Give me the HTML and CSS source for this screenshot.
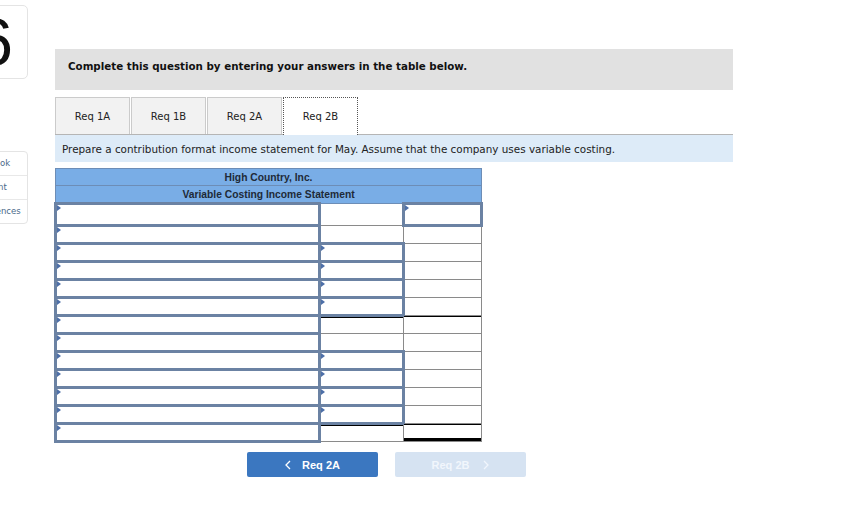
FILE: index.html
```html
<!DOCTYPE html>
<html>
<head>
<meta charset="utf-8">
<link rel="stylesheet" href="styles.css">
</head>
<body>
<div class="side">
  <div class="card"><span class="num">6</span></div>
  <ul class="links">
    <li>eBook</li>
    <li>Print</li>
    <li>References</li>
  </ul>
</div>
<div class="main">
  <div class="instr">Complete this question by entering your answers in the table below.</div>
  <div class="tabs">
    <div class="tab">Req 1A</div>
    <div class="tab">Req 1B</div>
    <div class="tab">Req 2A</div>
    <div class="tab active">Req 2B</div>
  </div>
  <div class="info">Prepare a contribution format income statement for May. Assume that the company uses variable costing.</div>
  <table class="stmt">
    <colgroup><col class="k1"><col class="k2"><col class="k3"></colgroup>
    <tr class="hd"><th colspan="3">High Country, Inc.</th></tr>
    <tr class="hd"><th colspan="3">Variable Costing Income Statement</th></tr>
    <tr class="first"><td class="in"></td><td></td><td class="in"></td></tr>
    <tr><td class="in"></td><td></td><td></td></tr>
    <tr><td class="in"></td><td class="in"></td><td></td></tr>
    <tr><td class="in"></td><td class="in"></td><td></td></tr>
    <tr><td class="in"></td><td class="in"></td><td></td></tr>
    <tr><td class="in"></td><td class="in"></td><td></td></tr>
    <tr><td class="in"></td><td class="bt"></td><td class="bt"></td></tr>
    <tr><td class="in"></td><td></td><td></td></tr>
    <tr><td class="in"></td><td class="in"></td><td></td></tr>
    <tr><td class="in"></td><td class="in"></td><td></td></tr>
    <tr><td class="in"></td><td class="in"></td><td></td></tr>
    <tr><td class="in"></td><td class="in"></td><td></td></tr>
    <tr><td class="in"></td><td class="bt"></td><td class="btb"></td></tr>
  </table>
  <div class="nav">
    <button class="btn prev"><svg width="6" height="10" viewBox="0 0 6 10"><polyline points="5,1 1,5 5,9" fill="none" stroke="currentColor" stroke-width="1.3"/></svg><span>Req 2A</span></button>
    <button class="btn next"><span>Req 2B</span><svg width="6" height="10" viewBox="0 0 6 10"><polyline points="1,1 5,5 1,9" fill="none" stroke="currentColor" stroke-width="1.3"/></svg></button>
  </div>
</div>
</body>
</html>
```

FILE: styles.css
```css
html, body { margin: 0; padding: 0; background: #fff; }
body { display: flex; align-items: flex-start; font-family: "DejaVu Sans", Verdana, sans-serif; color: #222; }

.side { width: 100px; margin-left: -72px; flex: none; }
.card {
  margin-top: 5px; height: 72px; border: 1px solid #e4e4e4; border-radius: 5px;
  text-align: right; padding-right: 14px; overflow: hidden;
}
.num { font-family: "Liberation Sans", Arial, sans-serif; font-size: 66px; line-height: 72px; color: #111; display: inline-block; }
.links {
  list-style: none; margin: 72px 0 0 0; padding: 0; border: 1px solid #e4e4e4; border-radius: 4px;
}
.links li {
  height: 23px; line-height: 23px; border-top: 1px solid #e8e8e8; font-size: 8.5px; color: #4a6a8a;
  padding-left: 38px; text-align: center; white-space: nowrap;
}
.links li:first-child { border-top: none; }

.main { margin-left: 27px; width: 678px; padding-top: 49px; flex: none; }
.instr {
  height: 41px; box-sizing: border-box; background: #e1e1e1; padding: 11px 0 0 13px;
  font-size: 10.3px; font-weight: bold; color: #111;
}
.tabs { display: flex; gap: 1px; margin-top: 7px; border-bottom: 1px solid #b5b5b5; }
.tab {
  width: 75px; height: 37px; box-sizing: border-box; background: #f2f2f2; border: 1px solid #cbcbcb;
  border-bottom: none; font-size: 10px; text-align: center; line-height: 37px; color: #222;
}
.tab.active { background: #fff; border: 1px dotted #555; border-bottom: none; margin-bottom: -1px; height: 38px; line-height: 38px; }
.info { height: 27px; box-sizing: border-box; background: #ddebf8; padding: 8px 0 0 7px; font-size: 10.4px; color: #222; }

.stmt {
  border-collapse: collapse; margin: 6px 0 0 -1px; width: 426px; table-layout: fixed;
  font-family: "Liberation Sans", Arial, sans-serif;
}
.stmt col.k1 { width: 264px; }
.stmt col.k2 { width: 84px; }
.stmt col.k3 { width: 78px; }
.stmt th {
  background: #79ade6; border: 1px solid #6d8db6; height: 16px; padding: 0;
  font-size: 10.3px; font-weight: bold; color: #1e2a38; text-align: center;
}
.stmt td { border: 1px solid #8a8a8a; height: 15px; padding: 0; position: relative; }
.stmt tr.first td { height: 19px; }
.stmt td.in { border: 3px solid #6b82a3; }
.stmt td.in::before {
  content: ""; position: absolute; left: 0; top: 0;
  border-left: 4px solid #4d6fa8; border-top: 3px solid transparent; border-bottom: 3px solid transparent;
}
.stmt td.bt { box-shadow: inset 0 1px 0 #000; }
.stmt td.btb { box-shadow: inset 0 1px 0 #000, inset 0 -3px 0 #000; }

.nav { display: flex; gap: 17px; margin: 9px 0 0 192px; }
.btn {
  width: 131px; height: 25px; border: none; border-radius: 2px; display: flex; align-items: center; justify-content: center;
  font-family: "Liberation Sans", Arial, sans-serif; font-size: 11px; font-weight: bold; padding: 0;
}
.btn.prev { background: #3b77c0; color: #fff; }
.btn.prev svg { margin-right: 11px; }
.btn.next { background: #d6e3f2; color: #f1f6fc; }
.btn.next svg { margin-left: 14px; }
```
